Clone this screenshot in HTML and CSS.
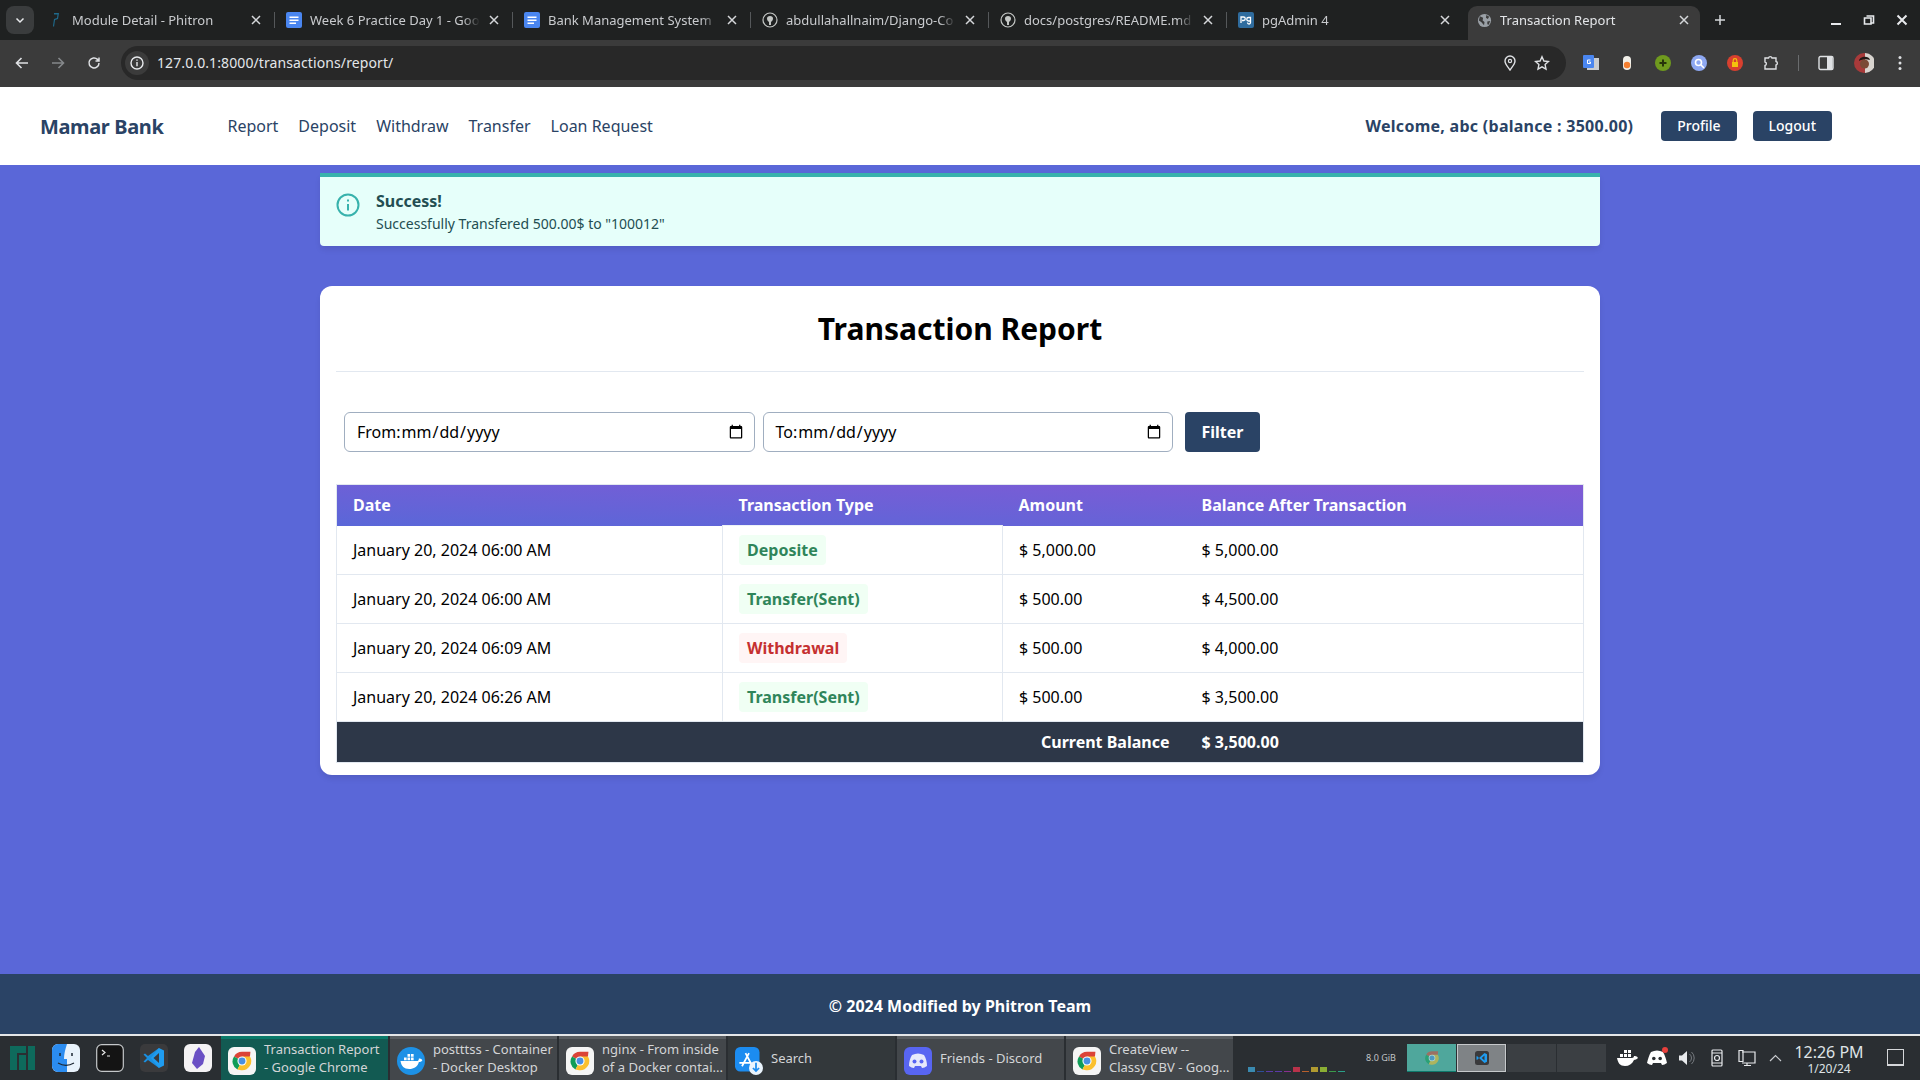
FILE: index.html
```html
<!DOCTYPE html>
<html lang="en">
<head>
    <meta charset="UTF-8">
    <title>Transaction Report</title>
    <link rel="stylesheet" href="styles.css">
</head>
<body>
    <svg class="defs" width="0" height="0">
        <symbol id="chrome" viewBox="0 0 24 24">
            <path d="M12 12 3.3 7A10 10 0 0 1 12 2h9.2l-.5 5z" fill="#db4437"/>
            <path d="M12 12 7 21.3A10 10 0 0 1 3.3 7z" fill="#0f9d58"/>
            <path d="M12 7h8.7A10 10 0 0 1 11 22l-4-.7L12 12z" fill="#fbc02d"/>
            <circle cx="12" cy="12" r="5" fill="#fff"/>
            <circle cx="12" cy="12" r="3.8" fill="#4a90e2"/>
        </symbol>
        <symbol id="chrome-box" viewBox="0 0 28 28">
            <rect width="28" height="28" rx="6" fill="#f5f5f5"/>
            <use href="#chrome" x="3" y="3" width="22" height="22"/>
        </symbol>
        <symbol id="doc" viewBox="0 0 16 16">
            <rect width="16" height="16" rx="2" fill="#4a86f0"/>
            <path d="M3.5 4.5h9v1.6h-9zM3.5 7.5h9v1.6h-9zM3.5 10.5h6.5v1.6H3.5z" fill="#fff"/>
        </symbol>
        <symbol id="github" viewBox="0 0 16 16">
            <circle cx="8" cy="8" r="7" fill="none" stroke="#c4c7c5" stroke-width="1.2"/>
            <path d="M5 6.5C5 5 6 4 8 4s3 1 3 2.500c0 2-1.200 3-2 3.200V13H7V9.700C6.200 9.500 5 8.500 5 6.500z" fill="#c4c7c5"/>
        </symbol>
        <symbol id="close" viewBox="0 0 10 10">
            <path d="M1 1l8 8M9 1L1 9" stroke="#d5d7da" stroke-width="1.500" fill="none"/>
        </symbol>
    </svg>

    <div class="tab-strip">
        <div class="tab-search"><svg width="10" height="10" viewBox="0 0 10 10"><path d="M1.500 3.500 5 7l3.500-3.500" stroke="#e8eaed" stroke-width="1.500" fill="none"/></svg></div>
        <div class="tab">
            <svg class="favicon" viewBox="0 0 16 16"><path d="M6 1h5l-1 6-3 1-1 7-1-1 1-7 3-1 .5-3.500H6z" fill="#1f6a8c"/></svg>
            <span class="tab-title">Module Detail - Phitron</span>
            <svg class="tab-close"><use href="#close"/></svg>
        </div>
        <div class="tab">
            <svg class="favicon"><use href="#doc"/></svg>
            <span class="tab-title">Week 6 Practice Day 1 - Goo</span>
            <svg class="tab-close"><use href="#close"/></svg>
        </div>
        <div class="tab">
            <svg class="favicon"><use href="#doc"/></svg>
            <span class="tab-title">Bank Management System</span>
            <svg class="tab-close"><use href="#close"/></svg>
        </div>
        <div class="tab">
            <svg class="favicon"><use href="#github"/></svg>
            <span class="tab-title">abdullahallnaim/Django-Co</span>
            <svg class="tab-close"><use href="#close"/></svg>
        </div>
        <div class="tab">
            <svg class="favicon"><use href="#github"/></svg>
            <span class="tab-title">docs/postgres/README.md</span>
            <svg class="tab-close"><use href="#close"/></svg>
        </div>
        <div class="tab tab-last">
            <svg class="favicon" viewBox="0 0 16 16"><rect width="16" height="16" rx="2" fill="#2f6c9e"/><path d="M3 11V5h2.500a1.700 1.700 0 0 1 0 3.500H4M12.500 5.500h-2a1.500 1.500 0 0 0 0 3.500h2V5.500zM12.500 9v1.500a1.500 1.500 0 0 1-3 0" stroke="#fff" stroke-width="1.300" fill="none"/></svg>
            <span class="tab-title">pgAdmin 4</span>
            <svg class="tab-close"><use href="#close"/></svg>
        </div>
        <div class="tab tab-active">
            <svg class="favicon" viewBox="0 0 16 16"><circle cx="8" cy="8" r="7" fill="#9aa0a6"/><path d="M3 3.500 6.500 5 6 8l2 1.500L7.500 13 4.500 9.500 2 8zM10 2l3 2-1.500 2.500L9.500 5zM11 9l3-.5-1.500 4-1.500-.5z" fill="#3b3b3b"/></svg>
            <span class="tab-title">Transaction Report</span>
            <svg class="tab-close"><use href="#close"/></svg>
        </div>
        <svg class="new-tab" width="12" height="12" viewBox="0 0 12 12"><path d="M6 1v10M1 6h10" stroke="#d5d7da" stroke-width="1.500"/></svg>
        <div class="window-controls">
            <svg width="12" height="12" viewBox="0 0 12 12"><path d="M1 10h10" stroke="#e8eaed" stroke-width="2"/></svg>
            <svg width="12" height="12" viewBox="0 0 12 12"><path d="M3.500 2h7v7h-2M1.500 4h6.500v6H1.500z" stroke="#e8eaed" stroke-width="1.600" fill="none"/></svg>
            <svg width="12" height="12" viewBox="0 0 12 12"><path d="M1.500 1.500l9 9M10.500 1.500l-9 9" stroke="#e8eaed" stroke-width="2"/></svg>
        </div>
    </div>

    <div class="toolbar">
        <svg class="tool-icon" viewBox="0 0 16 16"><path d="M14 8H3M7.500 3 2.500 8l5 5" stroke="#dfe1e4" stroke-width="1.600" fill="none"/></svg>
        <svg class="tool-icon" viewBox="0 0 16 16"><path d="M2 8h11M8.500 3l5 5-5 5" stroke="#85888b" stroke-width="1.600" fill="none"/></svg>
        <svg class="tool-icon" viewBox="0 0 16 16"><path d="M13 8a5 5 0 1 1-1.500-3.600L13 6M13 2.500V6H9.500" stroke="#dfe1e4" stroke-width="1.500" fill="none"/></svg>
        <div class="omnibox">
            <div class="site-info"><svg width="14" height="14" viewBox="0 0 14 14"><circle cx="7" cy="7" r="6" stroke="#e8eaed" stroke-width="1.400" fill="none"/><path d="M7 6v4.200M7 3.500v1.300" stroke="#e8eaed" stroke-width="1.400"/></svg></div>
            <span class="url">127.0.0.1:8000/transactions/report/</span>
            <svg class="omni-icon" viewBox="0 0 16 16"><path d="M8 15C5.500 11.500 3 9 3 6a5 5 0 0 1 10 0c0 3-2.500 5.500-5 9z" stroke="#dfe1e4" stroke-width="1.400" fill="none"/><circle cx="8" cy="6" r="1.600" stroke="#dfe1e4" stroke-width="1.200" fill="none"/></svg>
            <svg class="omni-icon" viewBox="0 0 16 16"><path d="M8 1.800 9.900 6l4.600.5-3.400 3.100.9 4.500L8 11.800l-4 2.300.9-4.500-3.400-3.100L6.100 6z" stroke="#dfe1e4" stroke-width="1.400" fill="none"/></svg>
        </div>
        <div class="extensions">
            <svg class="ext" viewBox="0 0 16 16"><rect x="4" y="3" width="12" height="12" fill="#c9ccd0"/><rect width="11" height="13" rx="1" fill="#4a86f0"/><path d="M7.500 5H4.500v3.500h3V7H6" stroke="#fff" stroke-width="1" fill="none"/></svg>
            <svg class="ext" viewBox="0 0 16 16"><rect x="4" y="1" width="8" height="14" rx="4" fill="#f1efe9"/><circle cx="8" cy="10" r="3.200" fill="#f57f30"/></svg>
            <svg class="ext" viewBox="0 0 16 16"><circle cx="8" cy="8" r="8" fill="#6f9a1e"/><path d="M8 4.500v7M4.500 8h7" stroke="#26330a" stroke-width="2"/></svg>
            <svg class="ext" viewBox="0 0 16 16"><circle cx="8" cy="8" r="8" fill="#8ea8f2"/><circle cx="7.500" cy="7.500" r="3" stroke="#fff" stroke-width="1.600" fill="none"/><path d="M10 10l3 3" stroke="#fff" stroke-width="1.600"/></svg>
            <svg class="ext" viewBox="0 0 16 16"><circle cx="8" cy="8" r="8" fill="#d8402f"/><rect x="5" y="7" width="6" height="5" fill="#f4c20d"/><path d="M6.200 7V5.500a1.800 1.800 0 0 1 3.600 0V7" stroke="#f4c20d" stroke-width="1.200" fill="none"/></svg>
            <svg class="ext" viewBox="0 0 16 16"><path d="M2 3h3.500a1.800 1.800 0 0 1 3.500 0H13v3.500a1.800 1.800 0 0 1 0 3.500V14H2v-3.500a1.800 1.800 0 0 0 0-3.500z" stroke="#dfe1e4" stroke-width="1.400" fill="none"/></svg>
            <span class="ext-sep"></span>
            <svg class="ext" viewBox="0 0 16 16"><rect x="1" y="1.500" width="14" height="13" rx="1.500" stroke="#dfe1e4" stroke-width="1.400" fill="none"/><rect x="9" y="2" width="5.500" height="12" fill="#dfe1e4"/></svg>
            <svg class="avatar" viewBox="0 0 20 20"><circle cx="10" cy="10" r="10" fill="#a83a3a"/><path d="M11 0a10 10 0 0 1 0 20z" fill="#d8d4cf"/><circle cx="10.500" cy="11" r="4.500" fill="#7a4a36"/><path d="M5 8c0-5 10-6 11-1-3-1-8-1-11 1z" fill="#221815"/></svg>
            <svg class="dots" viewBox="0 0 4 16"><circle cx="2" cy="2.500" r="1.500" fill="#dfe1e4"/><circle cx="2" cy="8" r="1.500" fill="#dfe1e4"/><circle cx="2" cy="13.500" r="1.500" fill="#dfe1e4"/></svg>
        </div>
    </div>

    <nav class="navbar">
        <a class="brand">Mamar Bank</a>
        <div class="nav-links">
            <a>Report</a>
            <a>Deposit</a>
            <a>Withdraw</a>
            <a>Transfer</a>
            <a>Loan Request</a>
        </div>
        <span class="welcome">Welcome, abc (balance : 3500.00)</span>
        <a class="nav-btn">Profile</a>
        <a class="nav-btn">Logout</a>
    </nav>

    <main class="content">
        <div class="alert">
            <svg class="alert-icon" viewBox="0 0 24 24"><circle cx="12" cy="12" r="10.500" stroke="#38b2ac" stroke-width="2" fill="none"/><path d="M12 11v6.500M12 6.500v2" stroke="#38b2ac" stroke-width="2"/></svg>
            <div>
                <p class="alert-title">Success!</p>
                <p class="alert-text">Successfully Transfered 500.00$ to "100012"</p>
            </div>
        </div>

        <section class="card">
            <h1>Transaction Report</h1>
            <form class="filter-form">
                <label class="date-field">From:<input type="date"></label>
                <label class="date-field">To:<input type="date"></label>
                <button type="button">Filter</button>
            </form>
            <table class="report">
                <colgroup>
                    <col class="col-date">
                    <col class="col-type">
                    <col class="col-amount">
                    <col>
                </colgroup>
                <thead>
                    <tr>
                        <th>Date</th>
                        <th>Transaction Type</th>
                        <th>Amount</th>
                        <th>Balance After Transaction</th>
                    </tr>
                </thead>
                <tbody>
                    <tr>
                        <td>January 20, 2024 06:00 AM</td>
                        <td class="type"><span class="badge badge-green">Deposite</span></td>
                        <td>$ 5,000.00</td>
                        <td>$ 5,000.00</td>
                    </tr>
                    <tr>
                        <td>January 20, 2024 06:00 AM</td>
                        <td class="type"><span class="badge badge-green">Transfer(Sent)</span></td>
                        <td>$ 500.00</td>
                        <td>$ 4,500.00</td>
                    </tr>
                    <tr>
                        <td>January 20, 2024 06:09 AM</td>
                        <td class="type"><span class="badge badge-red">Withdrawal</span></td>
                        <td>$ 500.00</td>
                        <td>$ 4,000.00</td>
                    </tr>
                    <tr>
                        <td>January 20, 2024 06:26 AM</td>
                        <td class="type"><span class="badge badge-green">Transfer(Sent)</span></td>
                        <td>$ 500.00</td>
                        <td>$ 3,500.00</td>
                    </tr>
                </tbody>
                <tfoot>
                    <tr>
                        <th colspan="3" class="total-label">Current Balance</th>
                        <th>$ 3,500.00</th>
                    </tr>
                </tfoot>
            </table>
        </section>
    </main>

    <footer class="site-footer">© 2024 Modified by Phitron Team</footer>

    <div class="taskbar">
        <div class="launchers">
            <svg class="launcher" viewBox="0 0 28 28"><path d="M2 2h16v7H9v17H2zM11 11h7v15h-7zM20 2h7v24h-7z" fill="#0e6a5c"/></svg>
            <svg class="launcher" viewBox="0 0 28 28"><rect width="28" height="28" rx="6" fill="#e8f2fb"/><path d="M6 0h9c-2 6-3 10-3 15h3v13H6a6 6 0 0 1-6-6V6a6 6 0 0 1 6-6z" fill="#2b8cf0"/><path d="M8 9v3M20 9v3" stroke="#1c2733" stroke-width="1.500"/><path d="M6 19c5 3 11 3 16 0" stroke="#1c2733" stroke-width="1.200" fill="none"/></svg>
            <svg class="launcher" viewBox="0 0 28 28"><rect x=".7" y=".7" width="26.600" height="26.600" rx="5" fill="#141414" stroke="#c5c8ca" stroke-width="1.200"/><path d="M6 6l3 2.500L6 11M11 12h3" stroke="#e8e8e8" stroke-width="1.200" fill="none"/></svg>
            <svg class="launcher" viewBox="0 0 28 28"><rect width="28" height="28" rx="5" fill="#3a3a3c"/><path d="M19 4v20L8 16l-3 2.500-1.500-1L7 14 3.500 10.500 5 9.500l3 2.500z" fill="#1a8fe0"/><path d="M19 4l5 2.500v15L19 24l-8-10z" fill="#1f9cf0"/><path d="M19 9v10l-5.500-5z" fill="#3a3a3c"/></svg>
            <svg class="launcher" viewBox="0 0 28 28"><rect width="28" height="28" rx="6" fill="#f4f2f4"/><path d="M15 3l6 9-2 8-6 5-5-6 3-11z" fill="#6a4fc4"/></svg>
        </div>
        <div class="task task-active">
            <svg class="task-icon"><use href="#chrome-box"/></svg>
            <span>Transaction Report<br>- Google Chrome</span>
        </div>
        <div class="task">
            <svg class="task-icon" viewBox="0 0 32 32"><circle cx="16" cy="16" r="16" fill="#1d91e6"/><path d="M4 16h19c1 0 2-1 2-3 1 0 3 0 4 2-1 2-3 2-4 2-1 5-6 8-11 8-6 0-9-3-10-9z" fill="#fff"/><path d="M8 12h3v3H8zM12 12h3v3h-3zM16 12h3v3h-3zM12 8h3v3h-3zM16 8h3v3h-3z" fill="#fff"/></svg>
            <span>postttss - Container<br>- Docker Desktop</span>
        </div>
        <div class="task">
            <svg class="task-icon"><use href="#chrome-box"/></svg>
            <span>nginx - From inside<br>of a Docker contai...</span>
        </div>
        <div class="task task-plain">
            <svg class="task-icon" viewBox="0 0 32 32"><rect width="28" height="28" rx="6" fill="#1c8cf0"/><path d="M8 22 16 7M12 7l8 15M5 18h14" stroke="#fff" stroke-width="2"/><circle cx="24" cy="24" r="8" fill="#eaf4fd"/><path d="M24 18v9M20.500 24l3.500 3.500 3.500-3.500" stroke="#1c8cf0" stroke-width="2" fill="none"/></svg>
            <span>Search</span>
        </div>
        <div class="task">
            <svg class="task-icon" viewBox="0 0 28 28"><rect width="28" height="28" rx="6" fill="#5865f2"/><path d="M8 8c4-2 8-2 12 0 2 3 3 7 3 11-2 1-3 2-5 2l-1-2H11l-1 2c-2 0-3-1-5-2 0-4 1-8 3-11z" fill="#e6e8fb"/><circle cx="10.500" cy="14.500" r="2" fill="#5865f2"/><circle cx="17.500" cy="14.500" r="2" fill="#5865f2"/></svg>
            <span>Friends - Discord</span>
        </div>
        <div class="task">
            <svg class="task-icon"><use href="#chrome-box"/></svg>
            <span>CreateView --<br>Classy CBV - Goog...</span>
        </div>
        <div class="cpu-graph">
            <i class="bar-tall blue"></i><i class="navy"></i><i class="purple"></i><i class="purple"></i><i class="magenta"></i><i class="bar-tall red"></i><i class="orange"></i><i class="bar-tall yellow"></i><i class="bar-tall lime"></i><i class="green"></i><i class="teal"></i>
        </div>
        <div class="memory">8.0 GiB</div>
        <div class="pager">
            <div class="desk desk-current"><svg class="desk-icon" width="16" height="16"><use href="#chrome"/></svg></div>
            <div class="desk desk-open"><svg width="14" height="14" viewBox="0 0 28 28"><rect width="28" height="28" rx="5" fill="#3a3a3c"/><path d="M19 4 8 14l11 10 5-2.500v-15zM19 9v10l-5.500-5zM4 10l4 4-4 4-1-1v-6z" fill="#1f9cf0"/></svg></div>
            <div class="desk"></div>
            <div class="desk"></div>
        </div>
        <div class="tray">
            <svg width="22" height="18" viewBox="0 0 22 18"><path d="M1 9h15c1 0 2-1 2-2 1 0 3 0 4 2-1 1-3 2-4 2-2 4-5 6-9 6-5 0-7-3-8-8z" fill="#fff"/><path d="M4 5h3v3H4zM8 5h3v3H8zM12 5h3v3h-3zM8 1h3v3H8zM12 1h3v3h-3z" fill="#fff"/></svg>
            <div class="tray-discord"><svg width="20" height="16" viewBox="0 0 20 16"><path d="M4 2c4-2 8-2 12 0 2 3 3 7 4 11-2 1-3 2-5 2l-1-2H6l-1 2c-2 0-3-1-5-2C1 9 2 5 4 2z" fill="#fff"/><circle cx="6.800" cy="8.500" r="1.800" fill="#2a2e32"/><circle cx="13.200" cy="8.500" r="1.800" fill="#2a2e32"/></svg><span class="tray-dot"></span></div>
            <svg width="18" height="18" viewBox="0 0 18 18"><path d="M1 6.500h3L9 2v14l-5-4.500H1z" fill="#e8eaed"/><path d="M11.500 5a5 5 0 0 1 0 8M13.500 3a8 8 0 0 1 0 12" stroke="#777b80" stroke-width="1" fill="none"/></svg>
            <svg width="12" height="18" viewBox="0 0 12 18"><rect x="1" y="1" width="10" height="16" rx="1" stroke="#e8eaed" stroke-width="1.200" fill="none"/><circle cx="6" cy="9" r="2.500" stroke="#e8eaed" stroke-width="1.200" fill="none"/><path d="M1 4h10M1 14h10" stroke="#e8eaed"/></svg>
            <svg width="18" height="18" viewBox="0 0 18 18"><path d="M4 3h13v11H4M1 1.500h4v11H1zM9 14v2.500M6 16.500h7" stroke="#e8eaed" stroke-width="1.200" fill="none"/></svg>
            <svg class="tray-chevron" width="13" height="8" viewBox="0 0 13 8"><path d="M1 7l5.500-5.500L12 7" stroke="#c9ccd0" stroke-width="1.200" fill="none"/></svg>
        </div>
        <div class="clock">
            <div class="clock-time">12:26 PM</div>
            <div class="clock-date">1/20/24</div>
        </div>
        <div class="show-desktop"></div>
    </div>
</body>
</html>
```

FILE: styles.css
```css
* {
    box-sizing: border-box;
}

html, body {
    margin: 0;
    height: 100%;
}

body {
    width: 1920px;
    height: 1080px;
    display: flex;
    flex-direction: column;
    overflow: hidden;
    font-family: "Noto Sans", sans-serif;
    font-size: 16px;
    color: #1a202c;
}

.defs {
    position: absolute;
}

/* browser window */
.tab-strip {
    height: 40px;
    flex: none;
    display: flex;
    align-items: flex-end;
    background-color: #1f2121;
    color: #c9cbce;
    font-size: 13px;
}

.tab-search {
    width: 28px;
    height: 28px;
    margin: 0 3px 6px 6px;
    border-radius: 8px;
    background-color: #3a3c3d;
    display: flex;
    align-items: center;
    justify-content: center;
}

.tab {
    width: 238px;
    height: 34px;
    padding: 0 11px 6px 11px;
    display: flex;
    align-items: center;
    position: relative;
}

.tab::after {
    content: "";
    position: absolute;
    right: 0;
    top: 6px;
    height: 16px;
    border-right: 1px solid #55585a;
}

.tab-last {
    width: 241px;
    padding-right: 15px;
}

.tab-last::after,
.tab-active::after {
    display: none;
}

.tab-active {
    width: 232px;
    background-color: #3b3b3b;
    border-radius: 9px 9px 0 0;
    padding: 0 8px 6px 9px;
    color: #e3e5e8;
}

.favicon {
    width: 16px;
    height: 16px;
    flex: none;
    margin-right: 8px;
}

.tab-active .favicon {
    width: 15px;
    height: 15px;
}

.tab-title {
    flex: 1;
    white-space: nowrap;
    overflow: hidden;
    -webkit-mask-image: linear-gradient(to right, #000 90%, transparent);
    mask-image: linear-gradient(to right, #000 90%, transparent);
}

.tab-close {
    width: 10px;
    height: 10px;
    flex: none;
    margin-left: 9px;
    margin-right: 3px;
}

.new-tab {
    margin: 0 0 14px 14px;
}

.window-controls {
    margin-left: auto;
    padding: 0 12px 14px 0;
    display: flex;
    gap: 21px;
}

.toolbar {
    height: 47px;
    flex: none;
    background-color: #3b3b3b;
    display: flex;
    align-items: center;
    padding: 0 0 1px 14px;
}

.tool-icon {
    width: 16px;
    height: 16px;
    margin-right: 20px;
}

.omnibox {
    width: 1445px;
    height: 34px;
    margin-left: -1px;
    padding: 0 16px 0 4px;
    background-color: #282828;
    border-radius: 17px;
    display: flex;
    align-items: center;
    gap: 16px;
}

.site-info {
    width: 24px;
    height: 24px;
    margin-right: -8px;
    border-radius: 50%;
    background-color: #3b3b3b;
    display: flex;
    align-items: center;
    justify-content: center;
}

.url {
    flex: 1;
    margin-bottom: 2px;
    font-size: 14px;
    letter-spacing: 0.1px;
    color: #e3e6ea;
}

.omni-icon {
    width: 16px;
    height: 16px;
}

.extensions {
    flex: 1;
    display: flex;
    align-items: center;
    padding-left: 17px;
}

.ext {
    width: 16px;
    height: 16px;
    margin-right: 20px;
}

.ext-sep {
    height: 16px;
    border-right: 1px solid #6a6c6e;
    margin: 0 19px 0 -1px;
}

.avatar {
    width: 20px;
    height: 20px;
    margin-right: 24px;
}

.dots {
    width: 4px;
    height: 16px;
}

/* site nav */
.navbar {
    height: 78px;
    flex: none;
    background-color: #fff;
    color: #2a4365;
    display: flex;
    align-items: center;
    padding: 0 88px 0 40px;
}

.brand {
    font-size: 20px;
    font-weight: 700;
    letter-spacing: -0.37px;
    margin-right: 64px;
}

.nav-links {
    display: flex;
    gap: 20px;
    flex: 1;
}

.welcome {
    font-weight: 700;
    letter-spacing: 0.27px;
    margin-right: 28px;
}

.nav-btn {
    height: 30px;
    margin-left: 16px;
    padding: 0 16px;
    background-color: #2a4365;
    color: #fff;
    border-radius: 4px;
    font-size: 14px;
    font-weight: 500;
    line-height: 30px;
}

.welcome + .nav-btn {
    margin-left: 0;
}

/* page */
.content {
    flex: 1;
    background-color: #5a67d8;
    padding-top: 8px;
}

.alert {
    width: 1280px;
    height: 73px;
    margin: 0 auto 40px;
    padding: 12px 16px 0;
    background-color: #e6fffa;
    border-top: 4px solid #38b2ac;
    border-radius: 0 0 4px 4px;
    box-shadow: 0 4px 6px -1px rgba(0, 0, 0, 0.1);
    color: #234e52;
    display: flex;
    gap: 16px;
}

.alert-icon {
    width: 24px;
    height: 24px;
    margin-top: 4px;
    flex: none;
}

.alert p {
    margin: 0;
}

.alert-title {
    font-weight: 700;
    line-height: 24px;
}

.alert p.alert-text {
    margin-top: 1px;
    font-size: 14px;
    line-height: 20px;
}

.card {
    width: 1280px;
    height: 489px;
    margin: 0 auto;
    padding: 0 16px;
    background-color: #fff;
    border-radius: 12px;
    box-shadow: 0 4px 6px -1px rgba(0, 0, 0, 0.1);
}

.card h1 {
    margin: 0;
    height: 86px;
    border-bottom: 1px solid #e2e8f0;
    font-size: 30px;
    line-height: 86px;
    font-weight: 700;
    text-align: center;
    color: #000;
}

.filter-form {
    display: flex;
    padding: 40px 0 32px 8px;
}

.date-field {
    width: 410.5px;
    height: 40px;
    margin-right: 8px;
    padding: 0 8px 0 12px;
    border: 1px solid #a0aec0;
    border-radius: 6px;
    display: flex;
    align-items: center;
    color: #000;
}

.date-field input {
    flex: 1;
    min-width: 0;
    height: 100%;
    padding: 0;
    border: 0;
    outline: 0;
    background: transparent;
    font-family: inherit;
    font-size: 16px;
    color: #000;
}

.filter-form button {
    width: 75px;
    height: 40px;
    margin-left: 4px;
    border: 0;
    border-radius: 4px;
    background-color: #2a4365;
    color: #fff;
    font-family: inherit;
    font-size: 16px;
    font-weight: 700;
}

.report {
    width: 1248px;
    border-collapse: collapse;
    table-layout: fixed;
    border: 1px solid #e2e8f0;
    color: #000;
}

.col-date {
    width: 386px;
}

.col-type {
    width: 280px;
}

.col-amount {
    width: 183px;
}

.report th {
    height: 41px;
    padding: 0 16px;
    text-align: left;
    font-weight: 700;
    color: #fff;
}

.report thead tr {
    background: linear-gradient(to top right, #5a67d8, #805ad5);
}

.report td {
    height: 49px;
    padding: 0 16px;
    border-bottom: 1px solid #e2e8f0;
}

.report td.type {
    border-left: 1px solid #e2e8f0;
    border-right: 1px solid #e2e8f0;
    border-top: 1px solid #edf2f7;
}

.report tfoot tr {
    background-color: #2d3748;
}

.report th.total-label {
    text-align: right;
}

.badge {
    display: inline-block;
    height: 30px;
    padding: 0 8px;
    border-radius: 4px;
    font-weight: 700;
    line-height: 30px;
    vertical-align: middle;
}

.badge-green {
    background-color: #f0fff4;
    color: #2f855a;
}

.badge-red {
    background-color: #fff5f5;
    color: #c53030;
}

.site-footer {
    height: 60px;
    flex: none;
    background-color: #2a4365;
    color: #fff;
    font-weight: 700;
    text-align: center;
    line-height: 65px;
}

/* desktop panel */
.taskbar {
    height: 46px;
    flex: none;
    background-color: #2a2e32;
    border-top: 2px solid #e4e6e8;
    display: flex;
    color: #d3d5d7;
    font-size: 13px;
}

.launchers {
    width: 221px;
    padding-left: 8px;
    display: flex;
    align-items: center;
    gap: 16px;
}

.launcher {
    width: 28px;
    height: 28px;
}

.task {
    width: 167px;
    margin-right: 2px;
    padding: 0 2px 0 7px;
    background-color: #43474b;
    border-top: 3px solid #5a5e62;
    display: flex;
    align-items: center;
    gap: 8px;
    line-height: 18px;
    white-space: nowrap;
}

.task span {
    margin-bottom: 3px;
}

.task-active {
    background-color: #125a52;
    border-top-color: #0a7a6a;
}

.task-plain {
    background-color: #33383b;
    border-top-color: #33383b;
}

.task-icon {
    width: 28px;
    height: 28px;
    margin-top: 2px;
    flex: none;
}

.cpu-graph {
    width: 112px;
    padding: 0 0 8px 13px;
    display: flex;
    align-items: flex-end;
    gap: 2px;
}

.cpu-graph i {
    width: 7px;
    height: 1px;
}

.cpu-graph .bar-tall {
    height: 5px;
}

.blue { background-color: #3a8ab0; }
.navy { background-color: #2c4f9a; }
.purple { background-color: #5b3aa8; }
.magenta { background-color: #8a2f8f; }
.red { background-color: #b8324a; }
.orange { background-color: #b8602c; }
.yellow { background-color: #b09a30; }
.lime { background-color: #8aae34; }
.green { background-color: #3a9a4a; }
.teal { background-color: #2aa088; }

.memory {
    width: 60px;
    padding-left: 8px;
    font-size: 9px;
    text-align: center;
    line-height: 44px;
    color: #c2c5c8;
}

.pager {
    display: flex;
    align-items: center;
    gap: 1px;
}

.desk {
    width: 49px;
    height: 28px;
    background-color: #3b3f43;
    display: flex;
    align-items: center;
    justify-content: center;
}

.desk-current {
    background-color: #4fa79c;
    border-bottom: 1px solid #0f7a6c;
}

.desk-icon {
    opacity: 0.55;
}

.desk-open {
    background-color: #7f8386;
    border: 1px solid #c6c9cb;
}

.tray {
    width: 186px;
    padding-left: 6px;
    display: grid;
    grid-auto-flow: column;
    grid-auto-columns: 30px;
    justify-content: start;
    justify-items: center;
    align-items: center;
}

.tray-discord {
    position: relative;
    display: flex;
}

.tray-dot {
    position: absolute;
    top: -3px;
    right: -1px;
    width: 6px;
    height: 6px;
    border-radius: 50%;
    background-color: #e8403c;
}

.tray-chevron {
    margin-right: 4px;
}

.clock {
    width: 72px;
    margin-left: 1px;
    text-align: center;
    color: #dfe3e6;
}

.clock-time {
    font-size: 16px;
    line-height: 20px;
    margin-top: 6px;
}

.clock-date {
    font-size: 12px;
    line-height: 13px;
}

.show-desktop {
    width: 17px;
    height: 17px;
    margin: 13px 0 0 22px;
    border: 1px solid #d5d7da;
    border-bottom-width: 2px;
}
```
